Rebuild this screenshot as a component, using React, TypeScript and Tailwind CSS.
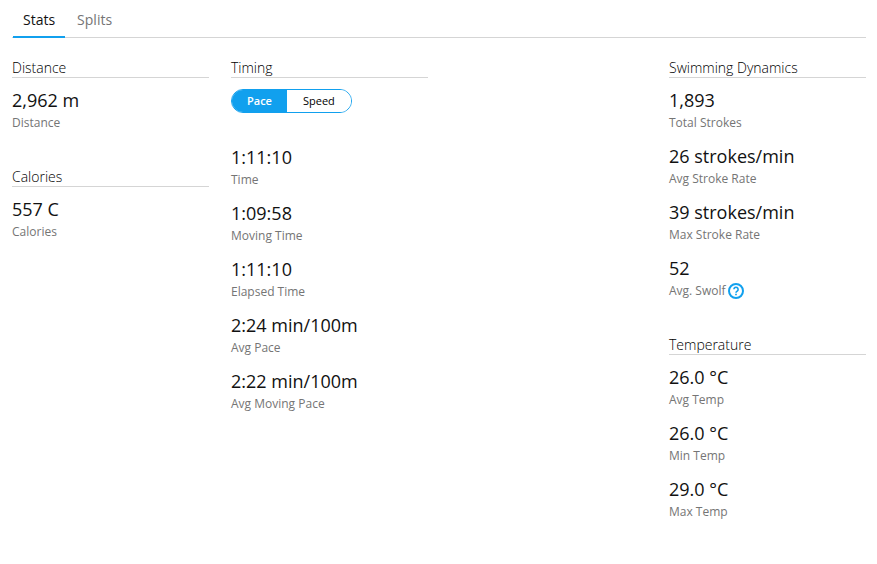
import React, { useState } from 'react';

type Stat = { value: string; label: string; help?: boolean };

const timing: Stat[] = [
  { value: '1:11:10', label: 'Time' },
  { value: '1:09:58', label: 'Moving Time' },
  { value: '1:11:10', label: 'Elapsed Time' },
  { value: '2:24 min/100m', label: 'Avg Pace' },
  { value: '2:22 min/100m', label: 'Avg Moving Pace' },
];

const dynamics: Stat[] = [
  { value: '1,893', label: 'Total Strokes' },
  { value: '26 strokes/min', label: 'Avg Stroke Rate' },
  { value: '39 strokes/min', label: 'Max Stroke Rate' },
  { value: '52', label: 'Avg. Swolf', help: true },
];

const temperature: Stat[] = [
  { value: '26.0 °C', label: 'Avg Temp' },
  { value: '26.0 °C', label: 'Min Temp' },
  { value: '29.0 °C', label: 'Max Temp' },
];

const HelpIcon: React.FC = () => (
  <svg className="w-4 h-4" viewBox="0 0 16 16" fill="none" stroke="#11a0ee" aria-hidden="true">
    <circle cx="8" cy="8" r="7" strokeWidth="2" />
    <path d="M5.9 6.3a2.1 2.1 0 1 1 3.3 1.8c-.8.55-1.2.85-1.2 1.7" strokeWidth="1.6" />
    <path d="M8 10.7v1.6" strokeWidth="1.7" />
  </svg>
);

const StatList: React.FC<{ stats: Stat[] }> = ({ stats }) => (
  <dl className="flex flex-col gap-3">
    {stats.map(({ value, label, help }) => (
      <div key={label} className="flex flex-col-reverse gap-0.5">
        <dt className="flex items-center gap-0.5 h-[18px] text-xs leading-[18px] text-[#757575]">
          {label}
          {help && (
            <button type="button" aria-label="About Swolf">
              <HelpIcon />
            </button>
          )}
        </dt>
        <dd className="text-lg leading-6 text-[#111111]">{value}</dd>
      </div>
    ))}
  </dl>
);

const Section: React.FC<{ title: string; children: React.ReactNode }> = ({ title, children }) => (
  <section>
    <h2 className="mb-[10px] border-b border-[#d5d5d5] text-sm leading-[19px] font-light text-black">{title}</h2>
    {children}
  </section>
);

const App: React.FC = () => {
  const [tab, setTab] = useState('Stats');
  const [mode, setMode] = useState('Pace');

  return (
    <main className="min-h-screen bg-white pl-3 pr-[11px] font-['Open_Sans',sans-serif]">
      <div role="tablist" className="flex gap-0.5 h-[38px] pl-px border-b border-[#d5d5d5]">
        {['Stats', 'Splits'].map((name) => (
          <button
            key={name}
            type="button"
            role="tab"
            aria-selected={tab === name}
            onClick={() => setTab(name)}
            className={`h-[38px] px-[10px] pt-1 border-b-2 text-sm ${
              tab === name ? 'border-[#11a0ee] text-[#111111]' : 'border-transparent text-[#757575]'
            }`}
          >
            {name}
          </button>
        ))}
      </div>

      <div className="grid grid-cols-4 gap-x-[22px] pt-5 pb-10">
        <div className="flex flex-col gap-[35px]">
          <Section title="Distance">
            <StatList stats={[{ value: '2,962 m', label: 'Distance' }]} />
          </Section>
          <Section title="Calories">
            <StatList stats={[{ value: '557 C', label: 'Calories' }]} />
          </Section>
        </div>

        <Section title="Timing">
          {/* Pace / speed switch */}
          <div className="inline-flex h-6 mt-px mb-8 rounded-full border border-[#11a0ee] overflow-hidden align-top">
            {['Pace', 'Speed'].map((name) => (
              <button
                key={name}
                type="button"
                aria-pressed={mode === name}
                onClick={() => setMode(name)}
                className={`text-[11px] leading-[22px] ${
                  mode === name ? 'px-[15px] bg-[#11a0ee] text-white font-semibold' : 'px-4 bg-white text-black'
                }`}
              >
                {name}
              </button>
            ))}
          </div>
          <StatList stats={timing} />
        </Section>

        <div className="col-start-4 flex flex-col gap-[35px]">
          <Section title="Swimming Dynamics">
            <StatList stats={dynamics} />
          </Section>
          <Section title="Temperature">
            <StatList stats={temperature} />
          </Section>
        </div>
      </div>
    </main>
  );
};

export default App;
